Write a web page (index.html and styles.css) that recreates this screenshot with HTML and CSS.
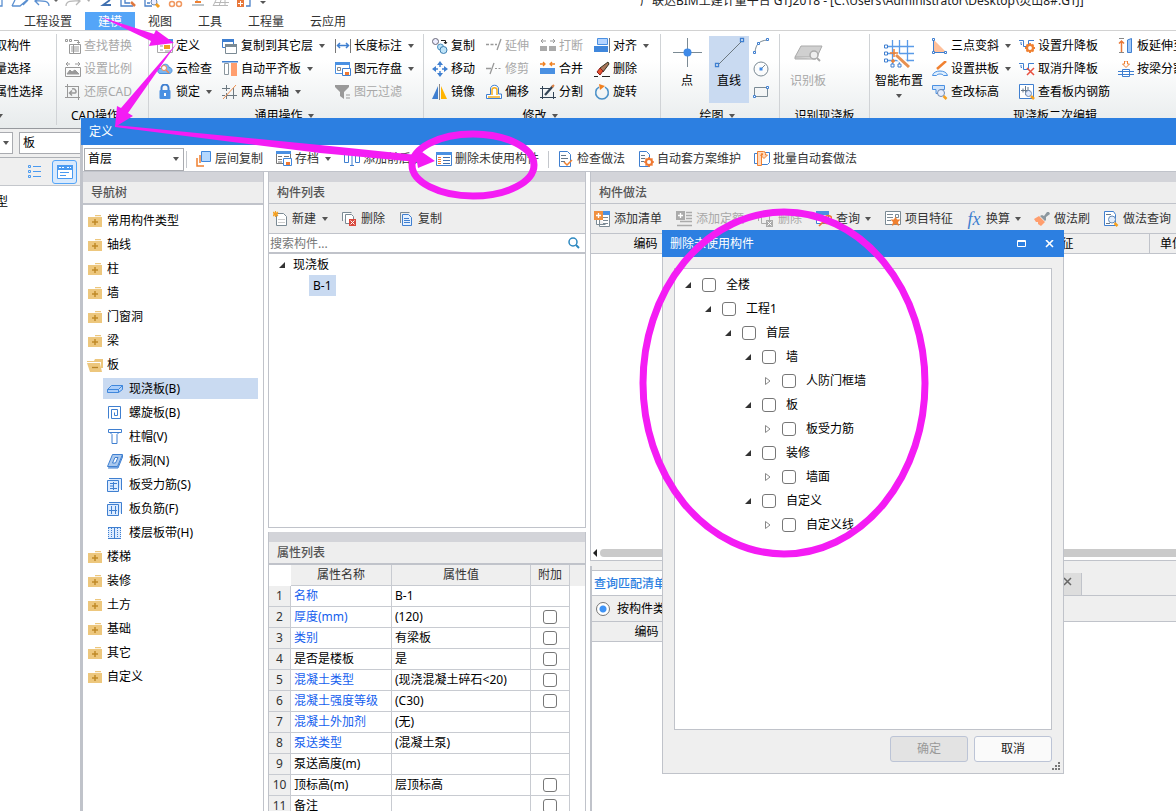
FILE: index.html
```html
<!DOCTYPE html>
<html lang="zh-CN">
<head>
<meta charset="utf-8">
<title>广联达BIM土建计量平台 GTJ2018</title>
<link rel="stylesheet" href="styles.css">
</head>
<body>
<svg class="sprite" aria-hidden="true">
  <symbol id="find" viewBox="0 0 16 16"><g fill="none" stroke="#999"><path d="M4.500 6.500h11v9h-11zM6 9h8M6 11h8M6 13h8M8.500 7v8"/><path d="M.5 1.500h2v2h-2zM4.500 1.500h2v2h-2zM9 2.500h4.500V5M12 4l1.500 1.500L15 4"/></g></symbol>
  <symbol id="scale" viewBox="0 0 16 16"><g fill="none" stroke="#999"><path d="M.5 6.500h15v9H.5zM1 3h4M3 1L1 3l2 2M10 3h5M13 1l2 2-2 2"/><path fill="#999" d="M2 13l3-4 2 2 3-2 4 4z"/></g></symbol>
  <symbol id="restore" viewBox="0 0 16 16"><g fill="none" stroke="#999"><path d="M2.500 0v14M0 2.500h14M13.500 2v14M0 13.500h15"/><path d="M5 9h5c2 0 1-5-3-4M7 6.500L4.500 9 7 11.500" stroke-width="1.500"/></g></symbol>
  <symbol id="define" viewBox="0 0 16 16"><path fill="#fff" stroke="#aaa" d="M.5 1.500h15v13H.5z"/><path fill="#4b8fdc" d="M6 1h10v4H6z"/><path fill="#f0a020" d="M7 7h6v4H7z"/><path stroke="#999" d="M3 8h3M3 12h3M8 13h6"/></symbol>
  <symbol id="cloud" viewBox="0 0 16 16"><path fill="#7db6ee" stroke="#4b8fdc" d="M3 12.500c-4-1-2-6 1-5 1-6 8-5 8-1 4 0 4 6 0 6z"/><circle cx="7" cy="7" r="2.500" fill="#fff" stroke="#f08a50"/><path stroke="#f08a50" stroke-width="1.500" d="M9 9l3 3"/></symbol>
  <symbol id="lock" viewBox="0 0 16 16"><path fill="none" stroke="#3f7fd0" stroke-width="2" d="M4.500 7V4a3.500 3.500 0 017 0v3"/><rect x="2.500" y="6" width="11" height="9" rx="1" fill="#4a90e2"/><path fill="#fff" d="M7 9h2v3H7z"/></symbol>
  <symbol id="floors" viewBox="0 0 16 16"><path fill="#fff" stroke="#3f7fd0" d="M.5 1.500h11v8H.5z"/><path fill="#3f7fd0" d="M0 1h12v3H0z"/><path fill="#fff" stroke="#7b8a94" d="M3.500 6.500h11v9h-11z"/><path fill="#7b8a94" d="M3 6h12v3H3z"/></symbol>
  <symbol id="align" viewBox="0 0 16 16"><path fill="#3f7fd0" d="M0 0h16v1.500H0z"/><path fill="#fff" stroke="#8c979e" d="M2.500 2.500h4v11h-4z"/><path fill="#ff9e6e" d="M9 2h6v13H9z"/></symbol>
  <symbol id="axis" viewBox="0 0 16 16"><path fill="none" stroke="#6c7880" d="M4.500 1v6M4.500 9v6M11.500 4v11M0 4.500h8M4 11.500h11M0 11.500h3"/><path stroke="#f09050" d="M1 15L14 1"/></symbol>
  <symbol id="dim" viewBox="0 0 16 16"><path stroke="#777" d="M.5 1v14M15.500 1v14"/><path fill="none" stroke="#3f7fd0" stroke-width="1.500" d="M3 7.500h10M5 5L2.500 7.500 5 10M11 5l2.500 2.500L11 10"/></symbol>
  <symbol id="save" viewBox="0 0 16 16"><path fill="#fff" stroke="#4a90e2" d="M.5 1.500h14v11H.5z"/><path fill="#4a90e2" d="M0 1h15v3H0z"/><path fill="none" stroke="#888" d="M2.500 6.500h3v3h-3z"/><path fill="#fff" stroke="#3f7fd0" d="M7.500 7.500h8v7h-8z"/><path fill="#f07830" d="M10 11h4v3h-4z"/></symbol>
  <symbol id="funnel" viewBox="0 0 16 16"><path fill="#999" d="M0 1h14v2L9 8v7l-4-3V8L0 3z"/><path stroke="#999" d="M11 11h4M11 14h4"/></symbol>
  <symbol id="copy3" viewBox="0 0 16 16"><circle cx="3.500" cy="3.500" r="3" fill="#eef" stroke="#667"/><path fill="none" stroke="#222" d="M9 2.500h4.500V5M12 4l1.500 2L15 4"/><circle cx="8.500" cy="9" r="3" fill="#bde3f8" stroke="#4a90c2"/><circle cx="11.500" cy="12" r="3.500" fill="#bde3f8" stroke="#3f7fb0"/></symbol>
  <symbol id="move" viewBox="0 0 16 16"><g fill="#3f7fd0"><path d="M8 0l3 4H5zM8 16l3-4H5zM0 8l4-3v6zM16 8l-4-3v6z"/><path d="M7.300 3h1.400v3H7.300zM7.300 10h1.400v3H7.300zM3 7.300h3v1.400H3zM10 7.300h3v1.400h-3z"/></g></symbol>
  <symbol id="mirror" viewBox="0 0 16 16"><path fill="#3f7fd0" d="M6 2v13H0z"/><path fill="#ffb400" d="M9 2v13h6z"/><path stroke="#888" d="M7.500 0v16"/></symbol>
  <symbol id="extend" viewBox="0 0 16 16"><path stroke="#999" stroke-width="1.300" stroke-dasharray="3 1.500" d="M0 6.500h11"/><path stroke="#999" stroke-width="1.300" d="M15 1l-4 11"/></symbol>
  <symbol id="trim" viewBox="0 0 16 16"><path stroke="#999" stroke-width="1.300" d="M0 7.500h5M8 2L4 13"/><path stroke="#999" stroke-dasharray="2 1.500" d="M9 7.500h7"/></symbol>
  <symbol id="offset" viewBox="0 0 16 16"><path fill="#fff" stroke="#3f7fd0" d="M.5 14.500v-4h4V5c0-5 8-5 8 0v5h3v4.500z"/><path fill="none" stroke="#f5ae20" stroke-width="1.500" d="M2 13h12M6 11V6c0-3 5-3 5 0v5"/></symbol>
  <symbol id="break" viewBox="0 0 16 16"><path fill="#aaa" d="M0 8h7v5H0zM9 8h7v5H9z"/><path fill="none" stroke="#999" d="M1 3h5M3 1L1 3l2 2M10 3h5M13 1l2 2-2 2"/></symbol>
  <symbol id="merge" viewBox="0 0 16 16"><path fill="#4a90e2" d="M0 7h15v6H0z"/><path fill="none" stroke="#f08020" stroke-width="1.300" d="M0 3h5M3 1l2 2-2 2M15 3h-5M12 1l-2 2 2 2"/></symbol>
  <symbol id="split" viewBox="0 0 16 16"><path fill="none" stroke="#345" d="M2.500 2v13M0 4.500h12M13.500 8v7M0 13.500h16"/><path stroke="#345" stroke-width="2.200" d="M5 11l8-9"/><path stroke="#e08040" stroke-width="2" d="M12 3l2-2"/></symbol>
  <symbol id="align2" viewBox="0 0 16 16"><path fill="#b4d4ff" stroke="#4a90e2" d="M3.500.5h10v6h-10z"/><path fill="#3f87dc" d="M0 8h14v6H0z"/><path stroke="#777" d="M15.500 0v15"/></symbol>
  <symbol id="erase" viewBox="0 0 16 16"><path stroke="#222" d="M0 15.500h4M8 15.500h8"/><path fill="#a8765a" stroke="#332" d="M6 7l8-6 1 2-6 8z"/><path fill="#e8502c" stroke="#822" d="M3 11l3-4 3 3-3 4z"/></symbol>
  <symbol id="rotate" viewBox="0 0 16 16"><path fill="none" stroke="#4a90c8" stroke-width="1.500" d="M5 3.200A6.300 6.300 0 1011 3.200"/><path fill="#f08020" d="M5 0l6 2-5 4z"/></symbol>
  <symbol id="point" viewBox="0 0 32 32"><path stroke="#7b8a94" d="M2 16.500h29M16.500 2v29"/><circle cx="16.500" cy="16.500" r="4" fill="#3f8ae8"/></symbol>
  <symbol id="line" viewBox="0 0 32 32"><path stroke="#6c7880" d="M5 29L30 4"/><path fill="#fff" stroke="#3f7fd0" stroke-width="1.300" d="M2.500 27.500h3v3h-3zM27.500 2.500h3v3h-3z"/></symbol>
  <symbol id="arc" viewBox="0 0 16 16"><path fill="none" stroke="#7b8a94" d="M2 14C3 6 6 3 14 2"/><path fill="#fff" stroke="#3f7fd0" d="M.5 13.500h2v2h-2zM13.500.5h2v2h-2zM4.500 4.500h2v2h-2z"/></symbol>
  <symbol id="circle" viewBox="0 0 16 16"><circle cx="8" cy="8" r="7" fill="none" stroke="#7b8a94"/><path stroke="#7b8a94" d="M8 8l4-4"/><path fill="#3f8ae8" d="M6.500 6.500h3v3h-3z"/></symbol>
  <symbol id="rect" viewBox="0 0 16 16"><path fill="none" stroke="#7b8a94" d="M1.500 3.500h13v9h-13z"/><path fill="#fff" stroke="#3f7fd0" d="M.5 11.500h2v2h-2zM13.500 2.500h2v2h-2z"/></symbol>
  <symbol id="slabfind" viewBox="0 0 32 32"><path fill="#d0d0d0" stroke="#aaa" d="M9 10h21l-5 11H3zM3 21v2h21"/><circle cx="22" cy="19" r="4" fill="#eee" stroke="#aaa" stroke-width="1.500"/><path stroke="#aaa" stroke-width="2" d="M25 22l3 3"/></symbol>
  <symbol id="smart" viewBox="0 0 32 32"><path stroke="#5a9be8" stroke-width="1.300" d="M3 10.500h28M3 17.500h28M3 24.500h28M9.500 4v25M16.500 4v25M24.500 4v25"/><path fill="#fff" stroke="#3f7fd0" d="M1.500 9h3v3h-3zM1.500 16h3v3h-3zM1.500 23h3v3h-3zM8 28h3v3H8zM15 28h3v3h-3z"/><path stroke="#fff" stroke-width="6" d="M12 18l14 13"/><path stroke="#e89050" stroke-width="3" d="M13 19l13 12"/><path stroke="#f08030" stroke-width="1.500" d="M11 13v8M7 17h8M8 25h4M10 23v4"/></symbol>
  <symbol id="tri" viewBox="0 0 16 16"><path fill="#ffc09a" d="M2 2l12 12H2z"/><path stroke="#3f7fd0" d="M1.500 2v12M2 14.500h12"/><path fill="#fff" stroke="#3f7fd0" d="M.5.5h2v2h-2zM.5 13.500h2v2h-2zM12.500 13.500h2v2h-2z"/></symbol>
  <symbol id="arch" viewBox="0 0 16 16"><path stroke="#f08030" stroke-width="2.500" d="M5 8l9-8"/><path fill="#e0f0ff" stroke="#4a90e2" d="M.5 14.500c1-6 14-6 15 0h-4c-1-2-6-2-7 0z"/></symbol>
  <symbol id="height" viewBox="0 0 16 16"><path fill="#cfe3fa" stroke="#4a90e2" d="M.5 1.500h12v4H8v4H4v-4H.500z"/><circle cx="9" cy="9" r="3.500" fill="#e8eefc" stroke="#6c88b0"/><path stroke="#f5a020" stroke-width="2.500" d="M11.500 12l3 3"/></symbol>
  <symbol id="lift" viewBox="0 0 16 16"><path fill="none" stroke="#3f7fd0" d="M0 2.500h4.500v6h5v-6H15M2 4v2.500h1"/><circle cx="11" cy="10" r="3" fill="#fff" stroke="#f08030" stroke-width="2.200"/><path stroke="#f08030" stroke-width="1.800" d="M11 5v2M11 13v2M6 10h2M14 10h2M7.500 6.500l1 1M14.500 6.500l-1 1M7.500 13.500l1-1M14.500 13.500l-1-1"/></symbol>
  <symbol id="unlift" viewBox="0 0 16 16"><path fill="none" stroke="#3f7fd0" d="M0 2.500h4.500v6h5v-6H15M2 4v2.500h1"/><path stroke="#e85040" stroke-width="1.500" d="M8 7l7 7M15 7l-7 7"/></symbol>
  <symbol id="rebarfind" viewBox="0 0 16 16"><path fill="#fff" stroke="#3f7fd0" d="M.5.500h14v14H.5z"/><path fill="none" stroke="#678" d="M6.500 2v9M2 6.500h9M4 4.500v4M9 3v4"/><circle cx="9.500" cy="9.500" r="3" fill="#dfe9fc" stroke="#6c88b0"/><path stroke="#f5a020" stroke-width="2.500" d="M12 12l3 3"/></symbol>
  <symbol id="slabext" viewBox="0 0 16 16"><path stroke="#888" d="M1 .5h5M1 14.500h5"/><path fill="none" stroke="#e87838" stroke-width="1.500" d="M3.500 14V3M1 5.500L3.500 3 6 5.500"/><path fill="#9fc8fa" stroke="#3f7fd0" d="M9.500 2l4-1.500v14h-4z"/></symbol>
  <symbol id="beam" viewBox="0 0 16 16"><path fill="none" stroke="#f08030" d="M6.500 0v3h-2L8 6.500 11.500 3h-2V0z"/><path fill="#fff" stroke="#3f7fd0" d="M0 10.500h16M0 13.500h16M4.500 8.500h7v7h-7z"/></symbol>
  <symbol id="layers" viewBox="0 0 16 16"><path fill="none" stroke="#f08030" stroke-width="1.500" d="M1 7v8h7M4 4v8"/><path fill="#b4d8ff" stroke="#3f87dc" d="M5.500.5h9v10h-9z"/></symbol>
  <symbol id="archive" viewBox="0 0 16 16"><path fill="#fff" stroke="#777" d="M.5.500h14v12H.500z"/><path fill="#4a90e2" d="M0 0h15v3H0z"/><path stroke="#777" d="M2 5.500h4M2 8.500h4M2 11h4M8 5.500h5"/><path fill="#fff" stroke="#3f87dc" d="M7.500 7.500h8v7h-8z"/><path fill="#f07830" d="M10 11h4v3h-4z"/></symbol>
  <symbol id="affix" viewBox="0 0 16 16"><path fill="none" stroke="#3f7fd0" d="M.5 3.500h4v8h-4zM11.500 3.500h4v8h-4zM8 3v11M6 2.500h4M6 14.500h4"/><path fill="#3f7fd0" d="M0 1h5v3H0zM11 1h5v3h-5z"/></symbol>
  <symbol id="unused" viewBox="0 0 16 16"><path fill="#fff" stroke="#3f7fd0" d="M.5 1.500h15v13H.5z"/><path fill="#4a90e2" d="M0 1h16v3H0z"/><path stroke="#3f6fb0" d="M7 6.500h7M7 9.500h7M7 12.500h7"/><path stroke="#f08030" stroke-dasharray="1 1" stroke-width="3" d="M3.500 6v8"/></symbol>
  <symbol id="check" viewBox="0 0 16 16"><path fill="#fff" stroke="#3f7fd0" d="M1.500.5h8l3 3v12h-11z"/><path stroke="#678" d="M3 4.500h5M3 7.500h7M3 10.500h4"/><path fill="none" stroke="#f08030" stroke-width="1.500" d="M6 11l3 3 5-5"/></symbol>
  <symbol id="plan" viewBox="0 0 16 16"><path fill="#fff" stroke="#3f7fd0" d="M1.500.5h7l3 3v12h-10z"/><path stroke="#678" d="M3 4.500h4M3 7.500h4M3 10.500h3"/><circle cx="11" cy="11" r="3" fill="#fff" stroke="#f07830" stroke-width="2"/><path stroke="#f07830" stroke-width="1.500" d="M11 6v2M11 14v2M6 11h2M14 11h2M7.500 7.500l1 1M14.500 7.500l-1 1M7.500 14.500l1-1M14.500 14.500l-1-1"/></symbol>
  <symbol id="batch" viewBox="0 0 16 16"><path fill="#fff" stroke="#3f7fd0" d="M3.500 2.500h-3v10h3M8 1.500h7.500v10l-2 2H8"/><path fill="#ffd9bd" stroke="#f08030" d="M3.500.5h6q2 0 2 2v1.500h2l-3.500 3.500L6.500 4h2V2.500h-1v12h-4z"/></symbol>
  <symbol id="folder" viewBox="0 0 16 16"><path fill="#edc77d" d="M1 4h14v10H1zM8 2h6v1.300H8z"/><path stroke="#c08a28" stroke-width="1.500" d="M5 9h6M8 6v6"/></symbol>
  <symbol id="folderopen" viewBox="0 0 16 16"><path fill="#edc77d" d="M0 4h7l1-2h8v9h-2V5H0zM0 6h13l2 9H3z"/><path stroke="#b88428" stroke-width="1.300" d="M5 10.500h6"/></symbol>
  <symbol id="slab" viewBox="0 0 16 16"><path fill="#a9cdfa" stroke="#3f87dc" d="M.5 8.500l4-4h11l-4 4zM.500 8.500v3h11v-3M11.500 11.500l4-3v-4"/></symbol>
  <symbol id="spiral" viewBox="0 0 16 16"><path fill="none" stroke="#3f7fd0" d="M1.500 13.500v-12h12v12h-9v-9h6v6h-3v-3"/></symbol>
  <symbol id="cap" viewBox="0 0 16 16"><path fill="none" stroke="#3f7fd0" d="M1.500.5h13v3h-13zM3 3.500l2 2v9h5v-9l2-2"/></symbol>
  <symbol id="hole" viewBox="0 0 16 16"><path fill="#a9c8ee" stroke="#3f7fd0" d="M5.500 1.500h10l-5 12H.500zM15.500 2v2L11 15H1"/><path fill="#fff" stroke="#3f7fd0" d="M8 4.500h3l-2.500 5.500h-3z"/></symbol>
  <symbol id="rebar1" viewBox="0 0 16 16"><path fill="#dcebff" stroke="#3f7fd0" d="M.5 3.500h11v11H.500zM2 1.500h12.500V13"/><path fill="none" stroke="#3f7fd0" d="M3 6.500h7M3 11.500h7M6.500 5v8M3 9h3"/></symbol>
  <symbol id="rebar2" viewBox="0 0 16 16"><path fill="#dcebff" stroke="#3f7fd0" d="M.5 3.500h11v11H.500zM2 1.500h12.500V13"/><path fill="none" stroke="#3f7fd0" d="M4.500 5v8M8.500 5v8M2 9.500h8"/></symbol>
  <symbol id="band" viewBox="0 0 16 16"><path fill="#dcebff" d="M1 2h13v12H1z"/><path stroke="#3f7fd0" d="M7.500 2v12M1 2.500h13M1 13.500h13"/><path stroke="#3f7fd0" stroke-dasharray="1 1" d="M1.500 3v10M4.500 3v10M10.500 3v10M13.500 3v10"/></symbol>
  <symbol id="new" viewBox="0 0 16 16"><path fill="#fff" stroke="#7b8a94" d="M3.500 2.500h7l3 3v9h-10z"/><path stroke="#ccc" d="M5 8.500h7M5 11.500h7"/><path stroke="#f5a020" stroke-width="1.200" d="M0 1l5 4M5 1L0 5M2.500 0v6M0 3h5"/></symbol>
  <symbol id="del" viewBox="0 0 16 16"><path fill="#fff" stroke="#7b8a94" d="M.5 10V1.500h9M3.500 3.500h6l2 2v7h-8z"/><path fill="#d9483c" d="M7 8h7v7H7z"/><path stroke="#fff" d="M8.500 9.500l4 4M12.500 9.500l-4 4"/></symbol>
  <symbol id="delgrey" viewBox="0 0 16 16"><path fill="#eee" stroke="#aaa" d="M.5 10V1.500h9M3.500 3.500h6l2 2v7h-8z"/><path fill="#aaa" d="M8 9h7v7H8z"/><path stroke="#fff" d="M9.500 10.500l4 4M13.500 10.500l-4 4"/></symbol>
  <symbol id="copy" viewBox="0 0 16 16"><path fill="none" stroke="#7b8a94" d="M1.500 12V1.500h9"/><path fill="#e4f0ff" stroke="#3f7fd0" d="M3.500 3.500h6l3 3v8h-9z"/><path stroke="#3f7fd0" d="M5 7.500h5M5 9.500h6M5 11.500h6"/></symbol>
  <symbol id="search" viewBox="0 0 16 16"><circle cx="7" cy="7" r="4" fill="none" stroke="#2c88c0" stroke-width="1.500"/><path stroke="#2c88c0" stroke-width="2" d="M10 10l3 3"/></symbol>
  <symbol id="addlist" viewBox="0 0 16 16"><path fill="#fff" stroke="#7b8a94" d="M2.500 5v8.500h9M5.500 2.500h10v13h-10z"/><path fill="#4a90e2" d="M9 0h7v4H9z"/><path stroke="#7b8a94" d="M9 6.500h5M9 9.500h5M9 12.500h5"/><path fill="#f09040" d="M0 0h9v9H0z"/><path stroke="#fff" stroke-width="1.300" d="M2 4.500h5M4.500 2v5"/></symbol>
  <symbol id="addgrey" viewBox="0 0 16 16"><path stroke="#aaa" stroke-width="1.300" d="M10 1.500h6M10 4.500h6M10 7.500h6M4 10.500h12M1 14.500h15"/><path fill="#aaa" d="M0 0h9v9H0z"/><path stroke="#fff" stroke-width="1.300" d="M2 4.500h5M4.500 2v5"/></symbol>
  <symbol id="query" viewBox="0 0 16 16"><path fill="#fff" stroke="#3f7fd0" d="M.5.500h12v12H.500z"/><path fill="#4a90e2" d="M0 0h13v4H0z"/><path fill="none" stroke="#f07830" stroke-width="1.700" d="M3 15l4-4c-2-6 8-9 9-3-1 5-7 5-9 3"/></symbol>
  <symbol id="feature" viewBox="0 0 16 16"><path fill="#fff" stroke="#7b8a94" d="M.5.500h15v13H.500z"/><path stroke="#7b8a94" d="M2 3.500h6M2 6.500h6M2 9.500h4"/><path fill="none" stroke="#7b8a94" d="M10.500 3.500h3v3h-3z"/><path fill="#f08030" d="M10.500 5.500l1.500 3h3.500L13 11l1 4-3.500-2L7 15l1-4-2.500-2.500H9z"/></symbol>
  <symbol id="brush" viewBox="0 0 16 16"><path fill="#ff9e6e" d="M0 8l5-3 6 6-4 4-3-2 0-2-2 0z"/><path fill="#8c979e" d="M6 5l2-1 2 1 3-4 2 0 1 2-4 3 0 3-1 1z"/></symbol>
  <symbol id="methodq" viewBox="0 0 16 16"><path fill="#fff" stroke="#3f7fd0" d="M1.500.5h9l2 3v11h-11z"/><path stroke="#678" d="M3 3.500h5M3 12.500h4"/><circle cx="9" cy="8.500" r="3.500" fill="#e4eefc" stroke="#5f88b8"/><path stroke="#f5a020" stroke-width="2.500" d="M11.500 12l3 3"/></symbol>
  <symbol id="exp" viewBox="0 0 8 8"><path fill="#333" d="M7 1v6H1z"/></symbol>
  <symbol id="col" viewBox="0 0 8 8"><path fill="#fff" stroke="#888" d="M1.500 .5L6 4 1.500 7.500z"/></symbol>
</svg>

<main class="app">
  <header class="quick">
    <svg class="quick-icons" width="300" height="10" viewBox="0 0 300 10" aria-hidden="true">
      <path fill="none" stroke="#5a8fd0" stroke-width="1.300" d="M0 6h2V0M12 6h8l7-6M12 6l3-6M28 0l-5 5M49 6c0-6-8-5-13-5m3-3l-4 3 4 4"/>
      <path fill="none" stroke="#b8b8b8" stroke-width="1.300" d="M66 6c0-6 8-5 13-5m-3-3l4 3-4 4"/>
      <path fill="#666" d="M54 0h4l-2 2z"/><path fill="#aaa" d="M87 0h3l-1 2z"/>
      <path fill="none" stroke="#4070b0" stroke-width="1.800" d="M110 0l-7 5h8"/>
      <path fill="none" stroke="#4a80c8" stroke-width="1.300" d="M121 0v6h12M125 0v3h5M145 0v6h7M147 3h3"/>
      <path stroke="#e07840" stroke-width="2.500" d="M131 2l4 4"/><circle cx="154" cy="2" r="3" fill="#eef" stroke="#6888b0"/><path stroke="#f5a020" stroke-width="3" d="M156 4l3 3"/>
      <g fill="none" stroke="#f09860" stroke-width="1.500"><circle cx="172" cy="4" r="2.500"/><circle cx="179" cy="4" r="2.500"/></g>
      <path fill="none" stroke="#7b8a94" d="M192 5h12M197 0v3"/><path stroke="#f08030" stroke-width="2" d="M195 2h6"/>
      <path fill="none" stroke="#b8b8b8" d="M213 6l3-6M213 5.500h15M219 6l2-6M225 6V0M215 2.500h14"/>
      <path fill="#e8783c" d="M237 0h7v7h-7z"/><path stroke="#fff" d="M238 3.500h5M240.500 1v5"/><path fill="none" stroke="#4a80c8" stroke-width="1.300" d="M246 6h4V0"/><path fill="#555" d="M260 1h6l-3 3z"/>
    </svg>
    <h1 class="app-title">广联达BIM土建计量平台 GTJ2018 - [C:\Users\Administrator\Desktop\灵山8#.GTJ]</h1>
  </header>
  <nav class="tabs">
    <button>工程设置</button><button class="on">建模</button><button>视图</button><button>工具</button><button>工程量</button><button>云应用</button>
  </nav>
  <section class="ribbon">
    <div class="group g-pick">
      <div class="cols"><div class="stack"><button>提取构件</button><button>批量选择</button><button>按属性选择</button></div></div>
      <div class="caption"><i class="caret"></i></div>
    </div>
    <div class="group g-cad">
      <div class="cols"><div class="stack">
        <button disabled><svg class="ic"><use href="#find"/></svg>查找替换</button>
        <button disabled><svg class="ic"><use href="#scale"/></svg>设置比例</button>
        <button disabled><svg class="ic"><use href="#restore"/></svg>还原CAD</button>
      </div></div>
      <div class="caption">CAD操作<i class="caret"></i></div>
    </div>
    <div class="group g-common">
      <div class="cols">
        <div class="stack">
          <button><svg class="ic"><use href="#define"/></svg>定义</button>
          <button><svg class="ic"><use href="#cloud"/></svg>云检查</button>
          <button><svg class="ic"><use href="#lock"/></svg>锁定<i class="caret"></i></button>
        </div>
        <div class="stack">
          <button><svg class="ic"><use href="#floors"/></svg>复制到其它层<i class="caret"></i></button>
          <button><svg class="ic"><use href="#align"/></svg>自动平齐板<i class="caret"></i></button>
          <button><svg class="ic"><use href="#axis"/></svg>两点辅轴<i class="caret"></i></button>
        </div>
        <div class="stack">
          <button><svg class="ic"><use href="#dim"/></svg>长度标注<i class="caret"></i></button>
          <button><svg class="ic"><use href="#save"/></svg>图元存盘<i class="caret"></i></button>
          <button disabled><svg class="ic"><use href="#funnel"/></svg>图元过滤</button>
        </div>
      </div>
      <div class="caption">通用操作<i class="caret"></i></div>
    </div>
    <div class="group g-edit">
      <div class="cols">
        <div class="stack">
          <button><svg class="ic"><use href="#copy3"/></svg>复制</button>
          <button><svg class="ic"><use href="#move"/></svg>移动</button>
          <button><svg class="ic"><use href="#mirror"/></svg>镜像</button>
        </div>
        <div class="stack">
          <button disabled><svg class="ic"><use href="#extend"/></svg>延伸</button>
          <button disabled><svg class="ic"><use href="#trim"/></svg>修剪</button>
          <button><svg class="ic"><use href="#offset"/></svg>偏移</button>
        </div>
        <div class="stack">
          <button disabled><svg class="ic"><use href="#break"/></svg>打断</button>
          <button><svg class="ic"><use href="#merge"/></svg>合并</button>
          <button><svg class="ic"><use href="#split"/></svg>分割</button>
        </div>
        <div class="stack">
          <button><svg class="ic"><use href="#align2"/></svg>对齐<i class="caret"></i></button>
          <button><svg class="ic"><use href="#erase"/></svg>删除</button>
          <button><svg class="ic"><use href="#rotate"/></svg>旋转</button>
        </div>
      </div>
      <div class="caption">修改<i class="caret"></i></div>
    </div>
    <div class="group g-draw">
      <div class="cols">
        <button class="big"><svg class="ic32"><use href="#point"/></svg>点</button>
        <button class="big on"><svg class="ic32"><use href="#line"/></svg>直线</button>
        <div class="stack">
          <button aria-label="弧线"><svg class="ic"><use href="#arc"/></svg></button>
          <button aria-label="圆"><svg class="ic"><use href="#circle"/></svg></button>
          <button aria-label="矩形"><svg class="ic"><use href="#rect"/></svg></button>
        </div>
      </div>
      <div class="caption">绘图<i class="caret"></i></div>
    </div>
    <div class="group g-recog">
      <div class="cols"><button class="big" disabled><svg class="ic32"><use href="#slabfind"/></svg>识别板</button></div>
      <div class="caption">识别现浇板</div>
    </div>
    <div class="group g-slab">
      <div class="cols">
        <button class="big"><svg class="ic32"><use href="#smart"/></svg>智能布置<i class="caret"></i></button>
        <div class="stack">
          <button><svg class="ic"><use href="#tri"/></svg>三点变斜<i class="caret"></i></button>
          <button><svg class="ic"><use href="#arch"/></svg>设置拱板<i class="caret"></i></button>
          <button><svg class="ic"><use href="#height"/></svg>查改标高</button>
        </div>
        <div class="stack">
          <button><svg class="ic"><use href="#lift"/></svg>设置升降板</button>
          <button><svg class="ic"><use href="#unlift"/></svg>取消升降板</button>
          <button><svg class="ic"><use href="#rebarfind"/></svg>查看板内钢筋</button>
        </div>
        <div class="stack">
          <button><svg class="ic"><use href="#slabext"/></svg>板延伸至墙梁边</button>
          <button><svg class="ic"><use href="#beam"/></svg>按梁分割板</button>
        </div>
      </div>
      <div class="caption">现浇板二次编辑</div>
    </div>
  </section>
  <aside class="side">
    <div class="side-selects">
      <span class="pick narrow"><select aria-label="楼层"><option></option></select></span>
      <span class="pick wide"><select aria-label="构件类型"><option>板</option></select></span>
    </div>
    <div class="side-views">
      <button aria-label="列表"><svg width="16" height="16" viewBox="0 0 16 16"><path stroke="#4a9af0" stroke-width="1.200" d="M6 2.500h8M6 7.500h8M6 12.500h8"/><path fill="none" stroke="#4a9af0" d="M1.500 1.500h2v2h-2zM1.500 6.500h2v2h-2zM1.500 11.500h2v2h-2z"/></svg></button>
      <button class="on" aria-label="卡片"><svg width="16" height="16" viewBox="0 0 16 16"><path fill="#fff" stroke="#4a9af0" d="M.5 1.500h15v13H.5z"/><path fill="#4a9af0" d="M0 1h16v5H0z"/><path stroke="#4a9af0" d="M3 8.500h9M3 11.500h6"/><path stroke="#fff" d="M2 3.500h5M10 3.500h4" stroke-dasharray="2 1"/></svg></button>
    </div>
    <p class="side-item">常用构件类型</p>
  </aside>
</main>

<section class="define" aria-label="定义">
  <h2 class="win-title">定义</h2>
  <div class="define-body">
    <div class="bar">
      <span class="pick floor"><select aria-label="当前楼层"><option>首层</option></select></span>
      <i class="sep"></i>
      <button><svg class="ic"><use href="#layers"/></svg>层间复制</button>
      <button><svg class="ic"><use href="#archive"/></svg>存档<i class="caret"></i></button>
      <button><svg class="ic"><use href="#affix"/></svg>添加前后缀</button>
      <button><svg class="ic"><use href="#unused"/></svg>删除未使用构件</button>
      <i class="sep"></i>
      <button><svg class="ic"><use href="#check"/></svg>检查做法</button>
      <button><svg class="ic"><use href="#plan"/></svg>自动套方案维护</button>
      <button><svg class="ic"><use href="#batch"/></svg>批量自动套做法</button>
    </div>
    <div class="panes">
      <section class="pane nav">
        <h3>导航树</h3>
        <ul class="tree">
          <li><svg class="ic"><use href="#folder"/></svg>常用构件类型</li>
          <li><svg class="ic"><use href="#folder"/></svg>轴线</li>
          <li><svg class="ic"><use href="#folder"/></svg>柱</li>
          <li><svg class="ic"><use href="#folder"/></svg>墙</li>
          <li><svg class="ic"><use href="#folder"/></svg>门窗洞</li>
          <li><svg class="ic"><use href="#folder"/></svg>梁</li>
          <li><svg class="ic"><use href="#folderopen"/></svg>板</li>
          <li class="sub on"><svg class="ic"><use href="#slab"/></svg>现浇板(B)</li>
          <li class="sub"><svg class="ic"><use href="#spiral"/></svg>螺旋板(B)</li>
          <li class="sub"><svg class="ic"><use href="#cap"/></svg>柱帽(V)</li>
          <li class="sub"><svg class="ic"><use href="#hole"/></svg>板洞(N)</li>
          <li class="sub"><svg class="ic"><use href="#rebar1"/></svg>板受力筋(S)</li>
          <li class="sub"><svg class="ic"><use href="#rebar2"/></svg>板负筋(F)</li>
          <li class="sub"><svg class="ic"><use href="#band"/></svg>楼层板带(H)</li>
          <li><svg class="ic"><use href="#folder"/></svg>楼梯</li>
          <li><svg class="ic"><use href="#folder"/></svg>装修</li>
          <li><svg class="ic"><use href="#folder"/></svg>土方</li>
          <li><svg class="ic"><use href="#folder"/></svg>基础</li>
          <li><svg class="ic"><use href="#folder"/></svg>其它</li>
          <li><svg class="ic"><use href="#folder"/></svg>自定义</li>
        </ul>
      </section>
      <div class="middle">
        <section class="pane parts">
          <h3>构件列表</h3>
          <div class="tools">
            <button><svg class="ic"><use href="#new"/></svg>新建<i class="caret"></i></button>
            <button><svg class="ic"><use href="#del"/></svg>删除</button>
            <button><svg class="ic"><use href="#copy"/></svg>复制</button>
          </div>
          <label class="find"><input type="text" placeholder="搜索构件..." aria-label="搜索构件"><svg class="ic"><use href="#search"/></svg></label>
          <ul class="parts-tree">
            <li><svg class="tw"><use href="#exp"/></svg>现浇板</li>
            <li class="leaf"><span>B-1</span></li>
          </ul>
        </section>
        <section class="pane props">
          <h3>属性列表</h3>
          <table class="prop-table">
            <colgroup><col class="c-no"><col class="c-name"><col class="c-val"><col class="c-add"><col></colgroup>
            <thead><tr><th class="corner"></th><th>属性名称</th><th>属性值</th><th>附加</th><th class="rest"></th></tr></thead>
            <tbody>
              <tr><th>1</th><td class="key">名称</td><td>B-1</td><td></td><td class="rest"></td></tr>
              <tr><th>2</th><td class="key">厚度(mm)</td><td>(120)</td><td class="tick"><input type="checkbox" aria-label="厚度附加"></td><td class="rest"></td></tr>
              <tr><th>3</th><td class="key">类别</td><td>有梁板</td><td class="tick"><input type="checkbox" aria-label="类别附加"></td><td class="rest"></td></tr>
              <tr><th>4</th><td>是否是楼板</td><td>是</td><td class="tick"><input type="checkbox" aria-label="是否是楼板附加"></td><td class="rest"></td></tr>
              <tr><th>5</th><td class="key">混凝土类型</td><td>(现浇混凝土碎石&lt;20)</td><td class="tick"><input type="checkbox" aria-label="混凝土类型附加"></td><td class="rest"></td></tr>
              <tr><th>6</th><td class="key">混凝土强度等级</td><td>(C30)</td><td class="tick"><input type="checkbox" aria-label="混凝土强度等级附加"></td><td class="rest"></td></tr>
              <tr><th>7</th><td class="key">混凝土外加剂</td><td>(无)</td><td></td><td class="rest"></td></tr>
              <tr><th>8</th><td class="key">泵送类型</td><td>(混凝土泵)</td><td></td><td class="rest"></td></tr>
              <tr><th>9</th><td>泵送高度(m)</td><td></td><td></td><td class="rest"></td></tr>
              <tr><th>10</th><td>顶标高(m)</td><td>层顶标高</td><td class="tick"><input type="checkbox" aria-label="顶标高附加"></td><td class="rest"></td></tr>
              <tr><th>11</th><td>备注</td><td></td><td class="tick"><input type="checkbox" aria-label="备注附加"></td><td class="rest"></td></tr>
            </tbody>
          </table>
        </section>
      </div>
      <div class="right">
        <section class="pane method">
          <h3>构件做法</h3>
          <div class="tools roomy">
            <button><svg class="ic"><use href="#addlist"/></svg>添加清单</button>
            <button disabled><svg class="ic"><use href="#addgrey"/></svg>添加定额</button>
            <button disabled><svg class="ic"><use href="#delgrey"/></svg>删除</button>
            <button><svg class="ic"><use href="#query"/></svg>查询<i class="caret"></i></button>
            <button><svg class="ic"><use href="#feature"/></svg>项目特征</button>
            <button><span class="fx">fx</span>换算<i class="caret"></i></button>
            <button><svg class="ic"><use href="#brush"/></svg>做法刷</button>
            <button><svg class="ic"><use href="#methodq"/></svg>做法查询</button>
          </div>
          <table class="list-table">
            <colgroup><col class="c-code"><col><col class="c-feat"><col class="c-unit"></colgroup>
            <thead><tr><th>编码</th><th>名称</th><th>项目特征</th><th class="unit">单位</th></tr></thead>
          </table>
          <div class="blank"></div>
          <div class="hscroll"><i class="left-arrow"></i><i class="thumb"></i></div>
        </section>
        <section class="match">
          <div class="match-tabs"><button class="on">查询匹配清单</button><button class="last" aria-label="关闭"><svg width="10" height="10" viewBox="0 0 10 10"><path stroke="#666" stroke-width="1.500" d="M1 1l7 7M8 1L1 8"/></svg></button></div>
          <div class="match-mode"><label><input type="radio" name="mode" checked>按构件类型过滤</label></div>
          <table class="match-table"><thead><tr><th>编码</th></tr></thead></table>
        </section>
      </div>
    </div>
  </div>
</section>

<section class="dialog" role="dialog" aria-label="删除未使用构件">
  <header class="win-title">
    <h2>删除未使用构件</h2>
    <button aria-label="最大化"><svg width="10" height="8" viewBox="0 0 10 8"><path fill="none" stroke="#fff" d="M.5.500h8v6h-8zM0 1.500h9"/></svg></button>
    <button aria-label="关闭"><svg width="10" height="8" viewBox="0 0 10 8"><path stroke="#fff" stroke-width="1.600" d="M1 0l7 7M8 0L1 7"/></svg></button>
  </header>
  <div class="dialog-body">
    <ul class="check-tree">
      <li class="l0"><svg class="tw"><use href="#exp"/></svg><label><input type="checkbox">全楼</label></li>
      <li class="l1"><svg class="tw"><use href="#exp"/></svg><label><input type="checkbox">工程1</label></li>
      <li class="l2"><svg class="tw"><use href="#exp"/></svg><label><input type="checkbox">首层</label></li>
      <li class="l3"><svg class="tw"><use href="#exp"/></svg><label><input type="checkbox">墙</label></li>
      <li class="l4"><svg class="tw"><use href="#col"/></svg><label><input type="checkbox">人防门框墙</label></li>
      <li class="l3"><svg class="tw"><use href="#exp"/></svg><label><input type="checkbox">板</label></li>
      <li class="l4"><svg class="tw"><use href="#col"/></svg><label><input type="checkbox">板受力筋</label></li>
      <li class="l3"><svg class="tw"><use href="#exp"/></svg><label><input type="checkbox">装修</label></li>
      <li class="l4"><svg class="tw"><use href="#col"/></svg><label><input type="checkbox">墙面</label></li>
      <li class="l3"><svg class="tw"><use href="#exp"/></svg><label><input type="checkbox">自定义</label></li>
      <li class="l4"><svg class="tw"><use href="#col"/></svg><label><input type="checkbox">自定义线</label></li>
    </ul>
    <footer><button disabled>确定</button><button>取消</button></footer>
  </div>
  <svg class="grip" width="9" height="9" viewBox="0 0 9 9" aria-hidden="true"><path fill="#777" d="M6 0h2v2H6zM3 3h2v2H3zM6 3h2v2H6zM0 6h2v2H0zM3 6h2v2H3zM6 6h2v2H6z"/></svg>
</section>

<svg class="marks" width="1176" height="811" viewBox="0 0 1176 811" aria-hidden="true">
  <g fill="#f41cf4">
    <path d="M101 17L154 34 156 30 174 43 149 46 151 41z"/>
    <path d="M177 43L128 113 133 116 115 127 117 106 121 108z"/>
    <path d="M115 125L320 145 417 155 422 152 435 161 418 168 417 162 320 153 115 127z"/>
  </g>
  <g fill="none" stroke="#f41cf4" stroke-width="7">
    <ellipse cx="473" cy="165" rx="61" ry="31"/>
    <ellipse cx="784" cy="383" rx="141" ry="171"/>
  </g>
</svg>
</body>
</html>
```
FILE: styles.css
```css
* { box-sizing: border-box; }

body {
  margin: 0;
  height: 100vh;
  overflow: hidden;
  position: relative;
  background: #fff;
  color: #000;
  font: 12px/20px "Noto Sans", "Noto Sans CJK SC", sans-serif;
}

h1, h2, h3, p, ul { margin: 0; padding: 0; font-size: 12px; font-weight: normal; }
ul { list-style: none; }
button, input, select { font: inherit; color: inherit; margin: 0; }
button { border: 0; padding: 0; background: none; white-space: nowrap; }
button:disabled { color: #a8a8a8; }
.sprite { display: none; }
.ic { width: 16px; height: 16px; flex: none; }
.ic32 { width: 32px; height: 32px; flex: none; }
.tw { width: 8px; height: 8px; flex: none; }

.caret {
  flex: none;
  width: 6px;
  border: 3px solid transparent;
  border-top: 4px solid #555;
  border-bottom: 0;
  margin-left: 5px;
}

input[type="checkbox"] {
  appearance: none;
  width: 14px;
  height: 14px;
  border: 1px solid #777;
  border-radius: 3px;
  background: #fff;
}

.pick { display: flex; align-items: center; flex: none; border: 1px solid #a9abb0; background: #fff; }
.pick select { appearance: none; border: 0; background: none; flex: 1; min-width: 0; padding: 0 3px; line-height: 20px; }
.pick::after { content: ""; flex: none; border: 3px solid transparent; border-top: 4px solid #555; border-bottom: 0; margin-right: 4px; }

/* main window */
.app { height: 100%; display: flex; flex-direction: column; }
.quick { display: flex; flex: none; height: 12px; overflow: hidden; }
.quick-icons { flex: none; width: 300px; margin-right: 340px; }
.app-title { line-height: 18px; margin-top: -8px; white-space: nowrap; color: #222; }
.tabs { display: flex; flex: none; padding-left: 11px; height: 19px; border-bottom: 1px solid #d2d2d2; }
.tabs button { padding: 2px 13px 0; line-height: 16px; color: #333; }
.tabs .on { background: #54a5f8; color: #fff; }

.ribbon {
  display: flex;
  flex: none;
  height: 98px;
  overflow: hidden;
  padding: 3px 0;
  background: linear-gradient(#fff 30%, #e7ebec);
  border-bottom: 1px solid #96999e;
}
.group { flex: none; height: 91px; border-left: 1px solid #d0d3d6; padding-left: 8px; }
.cols { display: flex; gap: 10px; height: 69px; }
.stack button { display: flex; align-items: center; height: 23px; gap: 3px; }
.stack .caret { margin-left: 3px; }
.caption { display: flex; align-items: center; justify-content: center; height: 25px; padding-right: 12px; }
.g-pick { width: 56px; border: 0; padding: 0; overflow: hidden; }
.g-pick .stack { margin-left: -17px; }
.g-pick .caption { justify-content: flex-start; }
.g-pick .caption .caret { margin-left: -3px; }
.g-cad { width: 92px; }
.g-common { width: 275px; }
.g-edit { width: 237px; }
.g-edit .cols { gap: 11px; }
.g-draw { width: 119px; padding-left: 6px; }
.g-draw .cols { gap: 2px; }
.g-draw .stack { margin-left: 2px; }
.g-recog { width: 90px; }
.g-slab { flex: 1 0 306px; padding-left: 4px; }
.g-slab .cols { gap: 8px; }
.g-slab .caption { width: 374px; }
.big { display: flex; flex-direction: column; align-items: center; width: 40px; height: 67px; margin-top: 2px; line-height: 26px; }
.big.on { background: #c9daf1; }
.big .caret { margin: 0; }
.g-slab .big { width: 50px; }
.g-recog .caption { padding-right: 8px; }

.side { flex: 1; width: 81px; overflow: hidden; border-right: 1px solid #c0c3ca; }
.side-selects { display: flex; gap: 6px; height: 29px; padding: 3px 0; background: #efefef; border-bottom: 1px solid #aeb1b6; }
.narrow { width: 13px; border-left: 0; justify-content: flex-end; }
.narrow select { flex: 0 0 1px; width: 1px; padding: 0; }
.narrow::after { margin-right: 3px; }
.wide { width: 80px; }
.side-views { display: flex; align-items: center; justify-content: flex-end; gap: 5px; height: 28px; padding-right: 3px; background: #efefef; border-bottom: 1px solid #c4c7cc; }
.side-views button { display: grid; place-items: center; width: 25px; height: 24px; }
.side-views .on { border: 1px solid #54a5f8; border-radius: 3px; background: #d9eafd; }
.side-item { margin: 6px 0 0 -64px; white-space: nowrap; }

/* definition window */
.win-title { background: #2c7fe1; color: #fff; }
.define { position: absolute; left: 81px; top: 118px; right: 0; bottom: 0; display: flex; flex-direction: column; background: #fff; overflow: hidden; }
.define > .win-title { height: 27px; padding-left: 8px; line-height: 27px; flex: none; }
.define-body { flex: 1; min-height: 0; display: flex; flex-direction: column; border-left: 2px solid #c0c3ca; }
.bar { display: flex; align-items: center; gap: 3px; height: 27px; flex: none; border-bottom: 1px solid #c0c3ca; padding: 2px 0 0 1px; }
.bar button { display: flex; align-items: center; gap: 3px; height: 24px; padding: 0 5px; color: #333; }
.bar .caret { margin-left: 3px; }
.floor { width: 100px; height: 23px; margin-right: -2px; }
.sep { width: 1px; height: 17px; background: #c4c7cc; flex: none; margin: 0 1px; }

.panes { flex: 1; min-height: 0; display: grid; grid-template-columns: 181px 318px 1fr; gap: 4px; }
.pane { display: flex; flex-direction: column; min-height: 0; border-right: 1px solid #c0c3ca; }
.pane h3 { flex: none; height: 32px; border-top: 10px solid #d3d4d9; border-bottom: 1px solid #c0c3ca; background: #eee; padding-left: 8px; line-height: 21px; font-weight: 500; color: #555; }
.nav h3, .props h3 { height: 33px; border-bottom-width: 2px; }
.tree { padding: 4px 5px 0 4px; }
.tree li { display: flex; align-items: center; gap: 4px; height: 24px; }
.tree .sub { height: 21px; margin: 1px 0 3px 16px; padding-left: 4px; gap: 6px; }
.tree .sub + .sub { margin-top: 0; }
.tree .sub + li:not(.sub) { margin-top: -1px; }
.tree .on { background: #c9daf1; }

.middle { display: grid; grid-template-rows: 356px 1fr; gap: 4px; min-height: 0; }
.middle .pane { border-left: 1px solid #c0c3ca; }
.parts { border-bottom: 1px solid #c0c3ca; }
.tools { display: flex; align-items: center; flex: none; gap: 14px; height: 30px; padding-left: 4px; background: #eee; border-bottom: 1px solid #c0c3ca; }
.tools button { display: flex; align-items: center; gap: 3px; color: #333; }
.tools button:disabled { color: #a8a8a8; }
.tools .caret { margin-left: 3px; }
.find { display: flex; align-items: center; height: 20px; border-bottom: 2px solid #c0c3ca; padding-right: 3px; }
.find input { flex: 1; min-width: 0; border: 0; padding: 1px 1px 0; height: 18px; outline: 0; }
.find input::placeholder { color: #777; opacity: 1; }
.parts-tree li { display: flex; align-items: center; height: 21px; gap: 7px; padding-left: 9px; }
.parts-tree .leaf { padding-left: 40px; }
.leaf span { background: #c9daf1; padding: 0 4px; line-height: 21px; }

.props { overflow: hidden; }
.prop-table { table-layout: fixed; width: 100%; border-collapse: separate; border-spacing: 0; line-height: 20px; }
.c-no { width: 22px; }
.c-name { width: 101px; }
.c-val { width: 139px; }
.c-add { width: 39px; }
.prop-table th, .prop-table td { height: 21px; padding: 0 0 0 3px; border-right: 1px solid #c8cbd1; border-bottom: 1px solid #c8cbd1; font-weight: normal; white-space: nowrap; }
.prop-table th { padding: 0; background: #efefef; color: #333; }
.prop-table .corner { background: #fff; border: 0; }
.prop-table .rest { border: 0; }
.prop-table .key { color: #1560ee; }
.prop-table .tick { padding: 0; text-align: center; }
.tick input { display: block; margin: auto; }

.right { display: grid; grid-template-rows: 389px 1fr; gap: 5px; min-width: 0; min-height: 0; }
.method { border: 0; border-left: 1px solid #c0c3ca; border-bottom: 1px solid #c0c3ca; min-width: 0; overflow: hidden; }
.roomy { padding-left: 3px; }
.roomy button { gap: 4px; }
.roomy .caret { margin-left: 1px; }
.roomy button:nth-child(n+5) { margin-right: -1px; }
.fx { width: 16px; color: #3f7fd0; font: italic 18px/20px "Liberation Serif", serif; }
.list-table { table-layout: fixed; width: 100%; border-collapse: separate; border-spacing: 0; }
.c-code { width: 110px; }
.c-feat { width: 200px; }
.c-unit { width: 26px; }
.list-table th, .match-table th { height: 20px; padding: 0; font-weight: normal; background: #efefef; border-right: 1px solid #c0c3ca; border-bottom: 1px solid #c0c3ca; line-height: 19px; }
.list-table .unit { text-align: left; padding-left: 10px; overflow: hidden; white-space: nowrap; border-right: 0; }
.blank { flex: 1; }
.hscroll { display: flex; align-items: center; height: 15px; gap: 3px; padding-left: 2px; }
.left-arrow { border: 4px solid transparent; border-right: 4px solid #222; border-left: 0; }
.thumb { flex: 1; height: 8px; border-radius: 4px 0 0 4px; background: #cacaca; }
.match { border-left: 2px solid #c0c3ca; background: #fff; box-shadow: 0 -5px #efefef; }
.match-tabs { display: flex; height: 30px; background: #efefef; border-bottom: 1px solid #c0c3ca; }
.match-tabs .on { align-self: flex-end; height: 25px; padding: 1px 3px 0 2px; width: 100px; text-align: left; border-top: 1px solid #c0c3ca; background: #fff; color: #2c7fe1; font-weight: 500; }
.match-tabs .last { flex: 0 0 390px; display: flex; justify-content: flex-end; align-items: center; padding: 0 8px 4px 0; margin-top: 7px; border-right: 1px solid #c0c3ca; background: #ddd; }
.match-mode { height: 26px; background: #efefef; border-bottom: 1px solid #c0c3ca; }
.match-mode label { display: flex; align-items: center; gap: 7px; height: 25px; padding-left: 4px; }
.match-mode input { appearance: none; width: 14px; height: 14px; border: 1px solid #777; border-radius: 50%; background: radial-gradient(#3f93f5 3px, #fff 4px); }
.match-table { width: 110px; border-collapse: separate; border-spacing: 0; }

/* dialog */
.dialog { position: absolute; left: 662px; top: 230px; width: 402px; height: 544px; display: flex; flex-direction: column; background: #efefef; }
.dialog .win-title { display: flex; align-items: center; gap: 18px; height: 27px; flex: none; padding: 0 9px 0 8px; }
.dialog h2 { flex: 1; }
.dialog .win-title button { display: flex; }
.dialog-body { flex: 1; display: flex; flex-direction: column; padding: 11px 11px 0; border: 1px solid #c0c3ca; border-top: 0; }
.check-tree { height: 462px; padding: 4px 0 0 9px; background: #fff; border: 1px solid #c0c3ca; }
.check-tree li { display: flex; align-items: center; height: 24px; gap: 10px; }
.check-tree label { display: flex; align-items: center; gap: 10px; }
.l1 { margin-left: 20px; }
.l2 { margin-left: 40px; }
.l3 { margin-left: 60px; }
.l4 { margin-left: 80px; }
.dialog footer { display: flex; justify-content: flex-end; gap: 6px; padding-top: 6px; }
.dialog footer button { width: 78px; height: 26px; border: 1px solid #bcc4d6; border-radius: 3px; background: #fafafa; color: #222; }
.dialog footer button:disabled { background: #e3e3e3; color: #999; }
.grip { position: absolute; right: 3px; bottom: 3px; }

.marks { position: absolute; left: 0; top: 0; pointer-events: none; }
```
